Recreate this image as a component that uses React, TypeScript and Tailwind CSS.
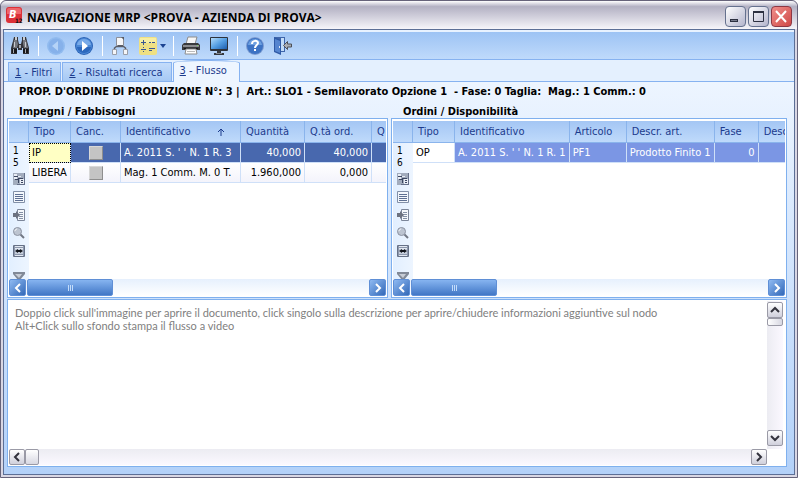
import { useState } from 'react';
import type { ReactNode } from 'react';

interface Column {
  label: string;
  width: number;
  sorted?: boolean;
}

const demandColumns: Column[] = [
  { label: 'Tipo', width: 42 },
  { label: 'Canc.', width: 50 },
  { label: 'Identificativo', width: 120, sorted: true },
  { label: 'Quantità', width: 64 },
  { label: 'Q.tà ord.', width: 67 },
  { label: 'Q', width: 67 },
];

const supplyColumns: Column[] = [
  { label: 'Tipo', width: 42 },
  { label: 'Identificativo', width: 114 },
  { label: 'Articolo', width: 57 },
  { label: 'Descr. art.', width: 87 },
  { label: 'Fase', width: 44 },
  { label: 'Desc', width: 90 },
];

const tabs = ['Filtri', 'Risultati ricerca', 'Flusso'];

function ToolButton({ label, children }: { label: string; children: ReactNode }) {
  return (
    <button type="button" aria-label={label} className="flex h-5 w-5 items-center justify-center">
      {children}
    </button>
  );
}

function Separator() {
  return <span className="-mr-px h-5 w-px bg-white" />;
}

function BinocularsIcon() {
  return (
    <svg width="20" height="20" viewBox="0 0 20 20">
      <path d="M4 1h4v3l1 4h2l1-4V1h4l1 4 2 7v6h-6v-6h-1v2H8v-2H7v6H1v-6l2-7z" fill="#33343a" />
      <path d="M4 4h3l1 4-1 4H3zM13 4h3l2 8h-4l-1-4z" fill="#75777e" />
      <path d="M5 1h2v3H5zM13 1h2v3h-2zM4 6h1v5H4zM15 6h1v5h-1z" fill="#c9cbd0" />
      <path d="M2 13h5v4H2zM13 13h5v4h-5z" fill="#17181b" />
      <path d="M3 13h1v4H3zM15 13h1v4h-1zM9 9h2v3H9z" fill="#a5a7ad" />
    </svg>
  );
}

function BackIcon() {
  return (
    <svg width="20" height="20" viewBox="0 0 20 20">
      <circle cx="10" cy="10" r="9" fill="#91bbef" />
      <circle cx="10" cy="10" r="7.500" fill="#86b1ea" />
      <path d="M12 5v10l-6-5z" fill="#b5d3f7" />
    </svg>
  );
}

function ForwardIcon() {
  return (
    <svg width="20" height="20" viewBox="0 0 20 20">
      <circle cx="10" cy="10" r="9" fill="#2a62b5" />
      <circle cx="10" cy="10" r="8" fill="#4a87d5" />
      <path d="M3 9a7 6 0 0 1 14 0z" fill="#78aae8" />
      <path d="M3 11a7 6 0 0 0 14 0z" fill="#2c68bd" />
      <path d="M8 5v10l6-5z" fill="#fff" />
    </svg>
  );
}

function TreeIcon() {
  return (
    <svg width="20" height="20" viewBox="0 0 20 20">
      <path d="M4.500 14v-2l2-1.500h7l2 1.500v2" stroke="#5a5d66" strokeWidth="1.500" fill="none" />
      <path d="M6.500 1.500h7v8h-7z" fill="#f5f6f8" stroke="#8b8f99" />
      <path d="M11 1h3v3zM8 9h5v2H8z" fill="#595c66" />
      <path d="M2.500 13.500h4v5h-4zM13.500 13.500h4v5h-4z" fill="#f5f6f8" stroke="#9a9ea8" />
    </svg>
  );
}

function OptionsIcon() {
  return (
    <svg width="20" height="20" viewBox="0 0 20 20">
      <rect x="1" y="1" width="18" height="18" rx="2" fill="#efe083" />
      <path d="M2 2h16v5H2z" fill="#f7eea2" />
      <path d="M3 6.500h5M5.500 4v5M3 13.500h5M11 6.500h2M14 6.500h3M11 12.500h6M11 14.500h3" stroke="#3a5691" fill="none" />
      <path d="M5 11h1v1H5zM5 15h1v1H5z" fill="#3a5691" />
    </svg>
  );
}

function PrinterIcon() {
  return (
    <svg width="20" height="20" viewBox="0 0 20 20">
      <path d="M7 1h9l-2 7H5z" fill="#f6f6f6" stroke="#8c8c8c" />
      <path d="M3 7h14l2 2v5H1V9z" fill="#3a3b3d" />
      <path d="M2 9h16v2H2z" fill="#8b8c8f" />
      <path d="M3 12h14v1H3z" fill="#151617" />
      <path d="M5 13h10l1 5H4z" fill="#fff" stroke="#8d8d8d" />
      <path d="M6 15h8v1H6z" fill="#bbb" />
      <path d="M16 9h1v1h-1z" fill="#7cd957" />
    </svg>
  );
}

function MonitorIcon() {
  return (
    <svg width="20" height="20" viewBox="0 0 20 20">
      <defs>
        <linearGradient id="screen" x1="0" y1="0" x2="1" y2="1">
          <stop offset="0" stopColor="#b4dcfb" />
          <stop offset="0.500" stopColor="#559fe3" />
          <stop offset="1" stopColor="#1d5eae" />
        </linearGradient>
      </defs>
      <rect x="1" y="1" width="18" height="14" rx="1" fill="#2d323b" />
      <rect x="2" y="2" width="16" height="11" fill="url(#screen)" />
      <path d="M8 15h4v2H8zM5 17h10v2H5z" fill="#35383e" />
      <path d="M7 17h6v1H7z" fill="#82868d" />
    </svg>
  );
}

function HelpIcon() {
  return (
    <svg width="20" height="20" viewBox="0 0 20 20">
      <circle cx="10" cy="10" r="9" fill="#7d9bd0" />
      <circle cx="10" cy="10" r="8" fill="#3d73c4" />
      <path d="M3 9a7 6 0 0 1 14 0z" fill="#6d9fe0" />
      <path d="M7 8c0-4 6-4 6-1 0 2-3 2-3 5" stroke="#fff" strokeWidth="2" fill="none" />
      <path d="M9 13h2v2H9z" fill="#fff" />
    </svg>
  );
}

function ExitIcon() {
  return (
    <svg width="20" height="20" viewBox="0 0 20 20">
      <path d="M1 1h11v15H1z" fill="#3f66ac" />
      <path d="M8 2h3v13H8z" fill="#c3dcf8" />
      <path d="M1 1l7 3v15l-7-3z" fill="#2f5aa6" />
      <path d="M2 3l5 2v12l-5-2z" fill="#5585d0" />
      <path d="M6 10h1v2H6z" fill="#dbe8fa" />
      <path d="M10.500 9.500l4-4v2.500h4v3h-4v2.500z" fill="#a9adb5" stroke="#4d5058" />
    </svg>
  );
}

function SaveLayoutIcon() {
  return (
    <svg width="12" height="12" viewBox="0 0 12 12">
      <path d="M0 0h12v12H0z" fill="#a2acbd" />
      <path d="M1 1h3v2H1zM1 4h3v2H1zM5 3h3v1H5zM7 6h4v5H7z" fill="#e9eef6" />
      <path d="M1 3h4v1H1zM2 6h3v1H2zM5 5h1v5H5zM6 5h4v1H6zM8 7h2v1H8zM8 9h2v1H8z" fill="#3b4660" />
      <path d="M11 0h1v12h-1zM4 11h8v1H4z" fill="#66718a" />
    </svg>
  );
}

function ListIcon() {
  return (
    <svg width="12" height="12" viewBox="0 0 12 12">
      <path d="M0.500 0.500h11v11H0.500z" fill="#f3f7fc" stroke="#8290a8" />
      <path d="M2 3.500h8M2 5.500h8M2 7.500h8M2 9.500h8" stroke="#5d6f92" />
    </svg>
  );
}

function ImportIcon() {
  return (
    <svg width="12" height="12" viewBox="0 0 12 12">
      <path d="M4.500 0.500h7v11h-7z" fill="#f5f8fc" stroke="#7c869a" />
      <path d="M6 3.500h4M6 5.500h4M6 7.500h4M6 9.500h4" stroke="#8490a5" />
      <path d="M0 4h3V2l4 4-4 4V8H0z" fill="#6c7280" />
    </svg>
  );
}

function LensIcon() {
  return (
    <svg width="12" height="12" viewBox="0 0 12 12">
      <path d="M7 7l4 4" stroke="#717784" strokeWidth="2" />
      <circle cx="4.500" cy="4.500" r="4" fill="#bcc4d1" stroke="#8c93a2" />
      <path d="M2 4c0-1 1-2 2-2" stroke="#fff" fill="none" />
    </svg>
  );
}

function FitWidthIcon() {
  return (
    <svg width="12" height="12" viewBox="0 0 12 12">
      <path d="M0.500 0.500h11v11H0.500z" fill="#e3e9f2" stroke="#667187" />
      <path d="M1 2.500h10M1 9.500h10M1.500 1v10M10.500 1v10" stroke="#8d98ad" />
      <path d="M2 4h8v5H2z" fill="#c5cddb" />
      <path d="M2 6l3-2v1h2V4l3 2-3 2V7H5v1z" fill="#12151c" />
    </svg>
  );
}

function FunnelIcon() {
  return (
    <svg width="12" height="12" viewBox="0 0 12 12">
      <path d="M0 0h12v2L7 8v4H5V8L0 2z" fill="#818997" />
      <path d="M2 2h7L6 6z" fill="#c7ccd5" />
    </svg>
  );
}

function Chevron({ d, color }: { d: string; color: string }) {
  return (
    <svg width="10" height="10" viewBox="0 0 10 10">
      <path d={d} fill="none" stroke={color} strokeWidth="2" />
    </svg>
  );
}

const LEFT = 'M7 1L3 5l4 4';
const RIGHT = 'M3 1l4 4-4 4';
const UP = 'M1 7l4-4 4 4';
const DOWN = 'M1 3l4 4 4-4';

function BlueScrollButton({ label, d }: { label: string; d: string }) {
  return (
    <button
      type="button"
      aria-label={label}
      className="flex h-[17px] w-[17px] shrink-0 items-center justify-center rounded-xs border border-[#5f8fd6] bg-linear-to-br from-[#8fbaf2] to-[#3369b8]"
    >
      <Chevron d={d} color="#fff" />
    </button>
  );
}

function GrayScrollButton({ label, d }: { label: string; d: string }) {
  return (
    <button
      type="button"
      aria-label={label}
      className="flex h-4 w-4 shrink-0 items-center justify-center rounded-xs border border-[#9a9aa6] bg-linear-to-b from-white to-[#d0d0dc]"
    >
      <Chevron d={d} color="#33333d" />
    </button>
  );
}

function Rail({ position, total }: { position: number; total: number }) {
  return (
    <div className="flex w-5 shrink-0 flex-col bg-linear-to-r from-[#e2efff] to-[#edf5ff]">
      <div className="h-[22px] shrink-0 border-r border-b border-[#8ab4ec] bg-linear-to-b from-[#a4c6f4] to-[#bfdafb]" />
      <div className="flex min-h-0 flex-1 flex-col overflow-hidden pt-0.5 pl-1">
        <p className="pb-1 text-[10px] leading-[12px]">
          {position}
          <br />
          {total}
        </p>
        <div className="flex flex-col gap-1.5">
          <SaveLayoutIcon />
          <ListIcon />
          <ImportIcon />
          <LensIcon />
          <FitWidthIcon />
        </div>
        <div className="mt-[15px]">
          <FunnelIcon />
        </div>
      </div>
    </div>
  );
}

function Grid({ columns, position, total, children }: { columns: Column[]; position: number; total: number; children: ReactNode }) {
  return (
    <div className="flex h-[180px] flex-col border border-[#7fb0ee] bg-white p-px pt-0.5">
      <div className="flex min-h-0 flex-1 overflow-hidden">
        <Rail position={position} total={total} />
        <div className="min-w-0 flex-1 overflow-hidden">
          <table className="w-max table-fixed border-separate border-spacing-0">
            <colgroup>
              {columns.map((c) => (
                <col key={c.label} style={{ width: c.width }} />
              ))}
            </colgroup>
            <thead>
              <tr>
                {columns.map((c) => (
                  <th
                    key={c.label}
                    className="h-[22px] border-r border-b border-[#8ab4ec] bg-linear-to-b from-[#a4c6f4] to-[#bfdafb] px-[5px] text-left font-normal whitespace-nowrap text-[#1b3a8c]"
                  >
                    <span className="flex items-center justify-between">
                      {c.label}
                      {c.sorted && (
                        <svg width="8" height="8" viewBox="0 0 8 8" className="mr-2.5">
                          <path d="M4 8V1M1 4l3-3 3 3" fill="none" stroke="#1b3a8c" />
                        </svg>
                      )}
                    </span>
                  </th>
                ))}
              </tr>
            </thead>
            <tbody>{children}</tbody>
          </table>
        </div>
      </div>
      <div className="flex h-[17px] shrink-0 justify-between bg-linear-to-b from-[#e6f0fd] to-white">
        <div className="flex gap-px">
          <BlueScrollButton label="Scorri a sinistra" d={LEFT} />
          <div className="flex h-[17px] w-[86px] items-center justify-center gap-px rounded-xs border border-[#5f8fd6] bg-linear-to-b from-[#86b4f0] to-[#4177c6]">
            <span className="h-1.5 w-px bg-[#c3dcfa]" />
            <span className="h-1.5 w-px bg-[#c3dcfa]" />
            <span className="h-1.5 w-px bg-[#c3dcfa]" />
          </div>
        </div>
        <BlueScrollButton label="Scorri a destra" d={RIGHT} />
      </div>
    </div>
  );
}

const cell = 'h-5 border-r border-b border-[#cfe0f8] px-[3px] whitespace-nowrap';
const selected = 'bg-[#4868ae] text-white';
const current = 'bg-[#7b96e4] text-white';

function Cancel({ label }: { label: string }) {
  return (
    <input
      type="checkbox"
      aria-label={label}
      className="mx-auto block h-3.5 w-3.5 appearance-none border border-t-[#d8d8d8] border-r-[#8e8e8e] border-b-[#8e8e8e] border-l-[#d8d8d8] bg-[#c4c4c4]"
    />
  );
}

export default function App() {
  const [tab, setTab] = useState(2);

  return (
    <div className="flex min-h-screen flex-col rounded-t-md border border-[#66637a] bg-[#d9d7e4] p-0.5 font-['DejaVu_Sans_Condensed','DejaVu_Sans',sans-serif] text-[11px] leading-[13px] text-black">
      <header className="-m-0.5 mb-0 flex h-7 shrink-0 items-center gap-1 rounded-t-md bg-linear-to-b from-white via-[#b3b1c3] via-20% to-[#f6f5fa] pr-[5px] pl-[5px]">
        <svg width="17" height="17" viewBox="0 0 17 17">
          <rect width="16" height="16" rx="3" fill="#dc3038" />
          <path d="M1 3a2 2 0 0 1 2-2h10a2 2 0 0 1 2 2v4H1z" fill="#ee666b" />
          <text x="3" y="11" fontSize="11" fontStyle="italic" fontWeight="bold" fill="#fff">B</text>
          <text x="9" y="16" fontSize="6" fontWeight="bold" fill="#111">12</text>
        </svg>
        <h1 className="flex-1 pt-1 font-['Open_Sans','DejaVu_Sans_Condensed',sans-serif] text-[12px] font-bold whitespace-nowrap">
          NAVIGAZIONE MRP &lt;PROVA - AZIENDA DI PROVA&gt;
        </h1>
        <div className="flex gap-0.5 pt-[3px]">
          <button type="button" aria-label="Riduci a icona" className="flex h-[21px] w-[21px] items-center justify-center rounded-sm border border-[#65718e] bg-linear-to-br from-white to-[#b4b5cc]">
            <svg width="15" height="15" viewBox="0 0 15 15">
              <path d="M2 10h8v3H2z" fill="#2c3040" />
              <path d="M3 11h6v1H3z" fill="#777b8c" />
            </svg>
          </button>
          <button type="button" aria-label="Ingrandisci" className="flex h-[21px] w-[21px] items-center justify-center rounded-sm border border-[#65718e] bg-linear-to-br from-white to-[#b4b5cc]">
            <svg width="15" height="15" viewBox="0 0 15 15">
              <path d="M2.500 2.500h10v10h-10z" fill="none" stroke="#2c3040" />
              <path d="M2 2h11v2H2z" fill="#2c3040" />
            </svg>
          </button>
          <button type="button" aria-label="Chiudi" className="flex h-[21px] w-[21px] items-center justify-center rounded-sm border border-[#8d3844] bg-linear-to-br from-[#ef8d8a] to-[#cf4848]">
            <svg width="15" height="15" viewBox="0 0 15 15">
              <path d="M2 2l10 11M12 2L2 13" stroke="#fff" strokeWidth="2" />
            </svg>
          </button>
        </div>
      </header>

      <div className="flex flex-1 flex-col border border-[#5c6f96] bg-[#b3d1f9]">
        <div className="flex h-[30px] shrink-0 items-center border-t-2 border-b border-t-[#e8f2ff] border-b-[#86b2f0] bg-linear-to-b from-[#9dc3f4] to-[#bfdafb] pl-1.5">
          <ToolButton label="Cerca"><BinocularsIcon /></ToolButton>
          <div className="flex items-center gap-2 pl-2">
            <Separator />
            <ToolButton label="Indietro"><BackIcon /></ToolButton>
            <ToolButton label="Avanti"><ForwardIcon /></ToolButton>
            <Separator />
            <ToolButton label="Struttura"><TreeIcon /></ToolButton>
            <button type="button" aria-label="Opzioni" className="-mr-px flex items-center gap-0.5">
              <OptionsIcon />
              <svg width="6" height="4" viewBox="0 0 6 4"><path d="M0 0h6L3 4z" fill="#1c4492" /></svg>
            </button>
            <Separator />
            <ToolButton label="Stampa"><PrinterIcon /></ToolButton>
            <ToolButton label="Video"><MonitorIcon /></ToolButton>
            <Separator />
            <ToolButton label="Aiuto"><HelpIcon /></ToolButton>
            <ToolButton label="Esci"><ExitIcon /></ToolButton>
          </div>
        </div>

        <div role="tablist" className="flex h-[22px] shrink-0 items-end gap-px border-b border-[#86b2f0] bg-[#e4f0fe] pl-1">
          {tabs.map((name, i) => (
            <button
              key={name}
              type="button"
              role="tab"
              aria-selected={tab === i}
              onClick={() => setTab(i)}
              className={
                tab === i
                  ? '-mb-px h-[22px] rounded-t-[30px_3px] border border-b-0 border-[#86b2f0] bg-[#edf5ff] pr-3 pb-0.5 pl-1.5 text-[#1b3a8c]'
                  : 'h-[19px] border border-b-0 border-[#86b2f0] bg-linear-to-b from-[#c4dcfa] to-[#a6c9f5] pr-2 pl-1.5 text-[#1b3a8c]'
              }
            >
              <span className="underline">{i + 1}</span> - {name}
            </button>
          ))}
        </div>

        <main className="flex flex-1 flex-col bg-linear-to-b from-[#edf5ff] to-[#b3d1f9] pr-[7px] pb-[7px] pl-[3px]">
          <p className="pt-[3px] pl-3 font-bold whitespace-pre">
            {"PROP. D'ORDINE DI PRODUZIONE N°: 3 |  Art.: SLO1 - Semilavorato Opzione 1  - Fase: 0 Taglia:  Mag.: 1 Comm.: 0"}
          </p>

          <div className="grid grid-cols-[minmax(0,381fr)_minmax(0,396fr)] gap-[3px] pt-[7px]">
            <section>
              <h2 className="pl-3 font-bold">Impegni / Fabbisogni</h2>
              <Grid columns={demandColumns} position={1} total={5}>
                <tr>
                  <td className={`${cell} bg-[#ffffc4] outline-1 -outline-offset-1 outline-dotted outline-black`}>IP</td>
                  <td className={`${cell} ${selected}`}><Cancel label="Cancella IP" /></td>
                  <td className={`${cell} ${selected}`}>A. 2011 S. ' ' N. 1 R. 3</td>
                  <td className={`${cell} ${selected} text-right`}>40,000</td>
                  <td className={`${cell} ${selected} text-right`}>40,000</td>
                  <td className={`${cell} ${selected}`} />
                </tr>
                <tr className="bg-linear-to-b from-white to-[#f3f3fb]">
                  <td className={cell}>LIBERA</td>
                  <td className={cell}><Cancel label="Cancella LIBERA" /></td>
                  <td className={cell}>Mag. 1 Comm. M. 0 T.</td>
                  <td className={`${cell} text-right`}>1.960,000</td>
                  <td className={`${cell} text-right`}>0,000</td>
                  <td className={cell} />
                </tr>
              </Grid>
            </section>

            <section>
              <h2 className="pl-3 font-bold">Ordini / Disponibilità</h2>
              <Grid columns={supplyColumns} position={1} total={6}>
                <tr>
                  <td className={cell}>OP</td>
                  <td className={`${cell} ${current}`}>A. 2011 S. ' ' N. 1 R. 1</td>
                  <td className={`${cell} ${current}`}>PF1</td>
                  <td className={`${cell} ${current}`}>Prodotto Finito 1</td>
                  <td className={`${cell} ${current} text-right`}>0</td>
                  <td className={`${cell} ${current}`} />
                </tr>
              </Grid>
            </section>
          </div>

          <div className="mt-px flex flex-1 flex-col border border-[#7fb0ee] bg-white p-px">
            <div className="flex flex-1">
              <p className="flex-1 pt-[5px] pl-1.5 font-['Lato','DejaVu_Sans_Condensed',sans-serif] text-[#808080]">
                Doppio click sull'immagine per aprire il documento, click singolo sulla descrizione per aprire/chiudere informazioni aggiuntive sul nodo
                <br />
                Alt+Click sullo sfondo stampa il flusso a video
              </p>
              <div className="mr-0.5 flex w-4 flex-col justify-between bg-linear-to-r from-[#ececf2] to-[#fbf8ff] pt-px pb-[3px]">
                <div>
                  <GrayScrollButton label="Scorri in alto" d={UP} />
                  <div className="h-2 w-4 rounded-xs border border-[#9a9aa6] bg-linear-to-r from-white to-[#d8d8e2]" />
                </div>
                <GrayScrollButton label="Scorri in basso" d={DOWN} />
              </div>
            </div>
            <div className="mr-[18px] flex justify-between bg-linear-to-b from-[#ececf2] to-[#fbf8ff]">
              <div className="flex">
                <GrayScrollButton label="Scorri a sinistra" d={LEFT} />
                <div className="h-4 w-3.5 rounded-xs border border-[#9a9aa6] bg-linear-to-b from-white to-[#d8d8e2]" />
              </div>
              <GrayScrollButton label="Scorri a destra" d={RIGHT} />
            </div>
          </div>
        </main>
      </div>
    </div>
  );
}
